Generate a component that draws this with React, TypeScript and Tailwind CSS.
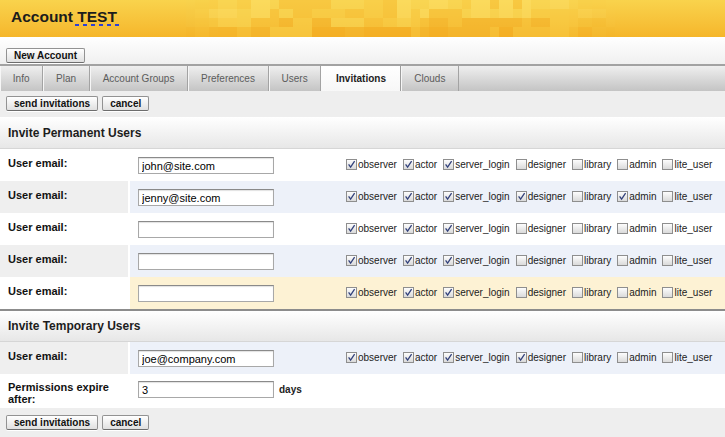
import React from "react";

const ROLES = ["observer", "actor", "server_login", "designer", "library", "admin", "lite_user"];
const TABS = ["Info", "Plan", "Account Groups", "Preferences", "Users", "Invitations", "Clouds"];

type Tone = "plain" | "alt" | "hi";
type Invite = { email: string; perms: number[]; tone: Tone };

const PERMANENT: Invite[] = [
  { email: "john@site.com", perms: [1, 1, 1, 0, 0, 0, 0], tone: "plain" },
  { email: "jenny@site.com", perms: [1, 1, 1, 1, 0, 1, 0], tone: "alt" },
  { email: "", perms: [1, 1, 1, 0, 0, 0, 0], tone: "plain" },
  { email: "", perms: [1, 1, 1, 0, 0, 0, 0], tone: "alt" },
  { email: "", perms: [1, 1, 1, 0, 0, 0, 0], tone: "hi" },
];

const TEMPORARY: Invite = { email: "joe@company.com", perms: [1, 1, 1, 1, 0, 0, 0], tone: "alt" };

// banner mosaic, decorative
const MOSAIC_COLORS = ["#fbdf68", "#f9d757", "#f8cd47", "#f6c13a", "#f4b32b", "#f3aa22"];
const MOSAIC = (() => {
  const out: { x: number; y: number; w: number; h: number; c: string; o: number }[] = [];
  let s = 11;
  const rnd = () => {
    s = (s * 16807) % 2147483647;
    return s / 2147483647;
  };
  let x = 186;
  while (x < 610) {
    const w = 9 + Math.floor(rnd() * 3) * 5;
    const fade = Math.max(0, Math.min(1, (x - 180) / 40, (615 - x) / 80));
    [0, 9, 18, 27].forEach((y, r) => {
      const idx = Math.min(5, Math.floor(rnd() * 4) + (r >= 2 ? 1 : 0) + (r === 3 ? 1 : 0));
      out.push({ x, y, w, h: r === 3 ? 10 : 9, c: MOSAIC_COLORS[idx], o: 0.6 * fade });
    });
    x += w;
  }
  return out;
})();

function Btn({ children }: { children: React.ReactNode }) {
  return (
    <button className="h-[15px] rounded-[2px] border border-[#929292] border-b-[#6d6d6d] bg-linear-to-b from-white to-[#e0e0e0] px-[7px] text-[10px] font-bold leading-[13px] text-[#111] shadow-[0_1px_0_#ffffff]">
      {children}
    </button>
  );
}

function TextBox({ value }: { value: string }) {
  return (
    <input
      readOnly
      value={value}
      className="h-[17px] w-[136px] shrink-0 border border-[#a8a8a8] border-t-[#8a8a8a] bg-white pl-[3px] text-[11px] leading-[15px] text-black shadow-[inset_0_1px_1px_rgba(0,0,0,0.12)] outline-none"
    />
  );
}

function Check({ on }: { on: boolean }) {
  return (
    <span className="inline-flex h-[11px] w-[11px] shrink-0 items-center justify-center border border-[#8e8e8e] bg-linear-to-b from-[#fdfdfd] to-[#dadada]">
      {on && (
        <svg width="9" height="9" viewBox="0 0 9 9">
          <path d="M1.6 4.4 L3.6 7.1 L7.6 1.1" fill="none" stroke="#33427c" strokeWidth="1.3" />
        </svg>
      )}
    </span>
  );
}

function Roles({ perms }: { perms: number[] }) {
  return (
    <div className="ml-[72px] flex h-[15px] items-center">
      {ROLES.map((r, i) => (
        <label key={r} className="mr-[6px] flex items-center text-[10px] leading-[12px] text-[#222]">
          <Check on={!!perms[i]} />
          <span className="ml-[1px]">{r}</span>
        </label>
      ))}
    </div>
  );
}

function EmailRow({ email, perms, tone }: Invite) {
  const labelBg = tone === "alt" ? "bg-[#efefef]" : "bg-white";
  const cellBg = tone === "alt" ? "bg-[#edf1f9]" : tone === "hi" ? "bg-[#fdf2d4]" : "bg-white";
  return (
    <div className="flex h-[32px]">
      <div className={`w-[130px] shrink-0 border-r-2 border-white pl-[8px] pt-[8px] text-[11px] font-bold leading-[12px] text-[#111] ${labelBg}`}>
        User email:
      </div>
      <div className={`flex flex-1 items-start pl-[8px] pt-[8px] ${cellBg}`}>
        <TextBox value={email} />
        <Roles perms={perms} />
      </div>
    </div>
  );
}

function SectionTitle({ children, top }: { children: React.ReactNode; top?: boolean }) {
  return (
    <div
      className={`flex items-center border-b border-[#d6d6d6] bg-linear-to-b from-white to-[#e7e7e7] pl-[8px] text-[12px] font-bold text-[#1d1d1d] ${
        top ? "h-[33px] border-t-2 border-t-[#8c8c8c]" : "h-[32px]"
      }`}
    >
      {children}
    </div>
  );
}

export default function App() {
  return (
    <div className="h-[437px] w-[725px] overflow-hidden bg-[#eeeeee] font-['Liberation_Sans',Arial,sans-serif]">
      {/* banner */}
      <header className="relative h-[37px] overflow-hidden bg-linear-to-b from-[#f9d34c] to-[#f5b62a]">
        <svg className="absolute inset-0" width="725" height="37" viewBox="0 0 725 37">
          {MOSAIC.map((m, i) => (
            <rect key={i} x={m.x} y={m.y} width={m.w} height={m.h} fill={m.c} opacity={m.o} />
          ))}
        </svg>
        <h1 className="relative pl-[11px] pt-[8px] text-[15.5px] font-bold leading-[18px] text-[#1c1c1c]">
          Account{" "}
          <span className="relative inline-block">
            TEST
            <svg className="absolute left-[-2px] top-[16px]" width="48" height="2" viewBox="0 0 48 2">
              <line x1="0" y1="1" x2="48" y2="1" stroke="#2c3fd6" strokeWidth="2" strokeDasharray="4 4" />
            </svg>
          </span>
        </h1>
      </header>

      <div className="h-[27px] bg-linear-to-b from-white to-[#f0f0f0] px-[6px] pt-[5px]">
        <Btn>New Account</Btn>
      </div>

      {/* tabs */}
      <nav className="flex h-[27px] border-t-2 border-[#a2a2a2] bg-linear-to-b from-[#efefef] to-[#c4c4c4]">
        {TABS.map((t) =>
          t === "Invitations" ? (
            <div key={t} className="flex items-center border-r border-[#9d9d9d] bg-linear-to-b from-white to-[#f7f7f7] px-[14.5px] text-[10px] font-bold text-[#222]">
              {t}
            </div>
          ) : (
            <div key={t} className="flex items-center border-r border-[#a3a3a3] px-[12.8px] text-[10px] text-[#5c5c5c] shadow-[inset_1px_0_0_#f6f6f6]">
              {t}
            </div>
          )
        )}
      </nav>

      <div className="flex h-[26px] gap-[4px] px-[6px] pt-[5px]">
        <Btn>send invitations</Btn>
        <Btn>cancel</Btn>
      </div>

      <SectionTitle>Invite Permanent Users</SectionTitle>
      {PERMANENT.map((p, i) => (
        <EmailRow key={i} {...p} />
      ))}

      <SectionTitle top>Invite Temporary Users</SectionTitle>
      <EmailRow {...TEMPORARY} />

      <div className="flex h-[34px] bg-white">
        <div className="w-[130px] shrink-0 pl-[8px] pr-[6px] pt-[7px] text-[11px] font-bold leading-[12px] text-[#111]">
          Permissions expire after:
        </div>
        <div className="flex flex-1 items-center self-start pl-[8px] pt-[7px]">
          <TextBox value="3" />
          <span className="ml-[5px] text-[10px] font-bold text-[#222]">days</span>
        </div>
      </div>

      <div className="flex gap-[4px] px-[6px] pt-[7px]">
        <Btn>send invitations</Btn>
        <Btn>cancel</Btn>
      </div>
    </div>
  );
}
